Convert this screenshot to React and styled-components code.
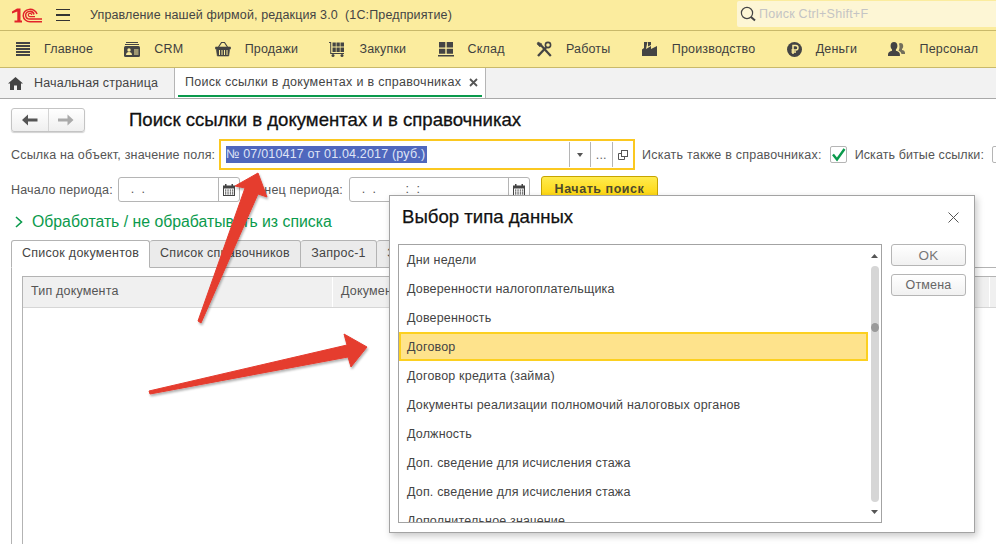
import React from "react";
import styled, { createGlobalStyle } from "styled-components";

const Global = createGlobalStyle`
  html, body { margin: 0; padding: 0; background: #fff; }
  * { box-sizing: border-box; }
  body { font-family: "Liberation Sans", Arial, sans-serif; font-size: 12.5px; color: #444; }
`;

const Page = styled.div`
  position: relative; width: 996px; height: 544px; overflow: hidden;
  display: flex; flex-direction: column; background: #fff;
  letter-spacing: 0.18px;
`;
const TitleBar = styled.header`
  height: 31px; flex: none; display: flex; align-items: center;
  background: #fbec9e; border-bottom: 1px solid #c9b96a; padding-left: 12px;
`;
const MenuBtn = styled.div`
  margin-left: 14px; width: 14px; height: 12px;
  border-top: 1.5px solid #333; border-bottom: 1.5px solid #333;
  display: flex; align-items: center;
  &::before { content: ""; display: block; width: 100%; height: 1.5px; background: #333; }
`;
const AppTitle = styled.div`
  margin-left: 20px; white-space: pre; color: #444; flex: 1; letter-spacing: 0.13px;
`;
const SearchBox = styled.div`
  width: 259px; height: 26px; margin-top: -2px; flex: none; background: #fdf6d5;
  display: flex; align-items: center; padding-left: 3px; gap: 3px;
  border-radius: 2px 0 0 2px; color: #c4c4c4; letter-spacing: 0.25px;
`;
const NavBar = styled.nav`
  height: 37px; flex: none; display: flex; align-items: center; gap: 31.3px;
  background: #fbec9e; border-bottom: 1px solid #c9b96a; padding-left: 14px;
`;
const NavItem = styled.div`
  display: flex; align-items: center; gap: 14px; color: #3f3f3f; white-space: nowrap;
`;
const TabBar = styled.div`
  height: 31px; flex: none; display: flex; background: #f2f2f2;
  border-bottom: 1px solid #a9a9a9;
`;
const HomeTab = styled.div`
  width: 175px; display: flex; align-items: center; gap: 11px; padding-left: 8px;
  border-right: 1px solid #b5b5b5; color: #444;
`;
const OpenTab = styled.div`
  position: relative; width: 311px; display: flex; align-items: center; justify-content: space-between;
  padding: 0 7px 2px 10px; background: #fff; border-right: 1px solid #b5b5b5; color: #444; letter-spacing: 0.3px;
  &::after { content: ""; position: absolute; left: 3px; right: 3px; bottom: 1px; height: 2px; background: #0a9a4c; }
`;
const Form = styled.main`
  flex: 1; display: flex; flex-direction: column; padding: 9px 0 0 11px; min-height: 0;
`;
const HeadRow = styled.div`
  height: 24px; display: flex; align-items: center; flex: none;
`;
const HistoryGroup = styled.div`
  width: 74px; height: 24px; display: flex; border: 1px solid #c4c4c4; border-radius: 3px;
  background: linear-gradient(#ffffff, #efefef); box-shadow: 0 1px 1px rgba(0,0,0,.18);
`;
const HistoryBtn = styled.div`
  flex: 1; display: flex; align-items: center; justify-content: center;
  &:first-child { border-right: 1px solid #d4d4d4; }
`;
const FormTitle = styled.h1`
  margin: 0 0 0 44px; font-size: 18.6px; font-weight: 400; color: #111; letter-spacing: 0;
  -webkit-text-stroke: 0.3px #111; white-space: nowrap;
`;
const FieldRow = styled.div`
  height: 31px; margin-top: 7px; display: flex; align-items: center; flex: none; white-space: nowrap;
`;
const FieldLabel = styled.span`
  color: #555; width: ${p => p.$w}px; flex: none; text-align: ${p => p.$right ? "right" : "left"};
`;
const RefField = styled.div`
  width: 416px; height: 31px; flex: none; border: 2px solid #fbc820; background: #fff;
  display: flex; align-items: center; padding-left: 5px;
`;
const Selected = styled.span`
  background: #4f67bd; color: #dfe4f6; height: 17px; line-height: 17px; display: block; width: 201px; white-space: nowrap; overflow: hidden;
`;
const FieldGap = styled.div`flex: 1;`;
const FieldAct = styled.div`
  width: 21.5px; height: 25px; border-left: 1px solid #b5b5b5; display: flex; align-items: center; justify-content: center; color: #666;
`;
const CheckLabel = styled.span`
  color: #555; margin-left: ${p => p.$ml}px; letter-spacing: ${p => p.$ls}px;
`;
const CheckBox = styled.div`
  width: 17px; height: 17px; margin-left: 8px; flex: none; border: 1px solid #b5b5b5; border-radius: 2px; background: #fff;
  display: flex; align-items: center; justify-content: center;
`;
const DateRow = styled.div`
  height: 25px; margin-top: 7px; display: flex; align-items: center; flex: none; white-space: nowrap;
`;
const DateField = styled.div`
  width: ${p => p.$w}px; height: 25px; flex: none; margin-left: ${p => p.$ml}px;
  border: 1px solid #b5b5b5; border-radius: 3px; background: #fff; display: flex; align-items: center;
  color: #555;
`;
const DateText = styled.span`
  flex: 1; padding-left: 8px; white-space: pre; line-height: 23px;
`;
const DateBtn = styled.div`
  width: 21px; height: 100%; flex: none; border-left: 1px solid #b5b5b5; display: flex; align-items: center; justify-content: center;
`;
const SearchBtn = styled.div`
  width: 117px; height: 26px; margin: -1px 0 0 11px; flex: none; border: 1px solid #c6a400; border-radius: 3px;
  background: linear-gradient(#ffeb4d, #fdd000); display: flex; align-items: center; justify-content: center;
  font-weight: 700; color: #4d4a2c; letter-spacing: 0.55px;
`;
const LinkRow = styled.div`
  height: 20px; margin-top: 10px; display: flex; align-items: center; gap: 9px; padding-left: 4px; flex: none;
  font-size: 15.8px; color: #0a9a4c; letter-spacing: 0; white-space: nowrap;
`;
const TabStrip = styled.div`
  margin-top: 8px; height: 28px; display: flex; flex: none; position: relative; z-index: 1; white-space: nowrap; letter-spacing: 0.27px;
`;
const Tab = styled.div`
  width: ${p => p.$w}px; height: 28px; flex: none; display: flex; align-items: center; justify-content: center;
  padding-bottom: 2px;
  border: 1px solid #b3b3b3; border-left-width: ${p => p.$active ? 1 : 0}px; border-radius: 3px 3px 0 0;
  border-bottom: ${p => p.$active ? "1px solid #fff" : "1px solid #b3b3b3"};
  background: ${p => p.$active ? "#fff" : "#ebebeb"}; color: #444; overflow: hidden;
`;
const TabPanel = styled.section`
  flex: 1; margin-top: -1px; border-left: 1px solid #b3b3b3; border-top: 1px solid #b3b3b3; padding: 8px 0 0 10px; min-height: 0;
`;
const Table = styled.div`
  height: 100%; border-left: 1px solid #b3b3b3;
`;
const TableHead = styled.div`
  height: 32px; display: grid; grid-template-columns: 309px 656px 1fr; gap: 1px;
  border-top: 1px solid #b3b3b3; border-bottom: 1px solid #d6d6d6; background: #fff;
`;
const HeadCell = styled.div`
  background: #f0f0f0; display: flex; align-items: center; padding: 0 0 2px 8px; color: #555; white-space: nowrap; overflow: hidden;
`;
const Dialog = styled.aside`
  position: absolute; left: 389px; top: 195px; width: 586px; height: 338px; z-index: 10;
  background: #fff; border: 1px solid #a3a3a3; box-shadow: 2px 3px 7px rgba(0,0,0,.22);
  display: flex; flex-direction: column; padding: 0 8px 8px;
`;
const DialogHead = styled.div`
  height: 48px; flex: none; display: flex; align-items: center; justify-content: space-between; padding: 0 7px 6px 4px;
`;
const DialogTitle = styled.h2`
  margin: 0; font-size: 18.6px; font-weight: 400; color: #111; letter-spacing: 0; -webkit-text-stroke: 0.25px #111;
`;
const DialogBody = styled.div`
  flex: 1; display: flex; gap: 9px; min-height: 0;
`;
const ListBox = styled.div`
  width: 484px; height: 279px; flex: none; border: 1px solid #a3a3a3; display: flex; overflow: hidden;
`;
const Rows = styled.ul`
  list-style: none; margin: 0; padding: 0; flex: 1; overflow: hidden;
`;
const Row = styled.li`
  height: 29px; display: flex; align-items: center; padding-left: ${p => p.$sel ? 6 : 8}px; white-space: nowrap; color: #444;
  ${p => p.$sel ? "background:#fee38c;border:2px solid #fcd020;" : ""}
`;
const ScrollCol = styled.div`
  width: 13px; flex: none; display: flex; flex-direction: column; align-items: center; padding: 9px 0 8px 0; margin-left: 0;
`;
const ScrollTrack = styled.div`
  width: 8px; flex: 1; margin: 8px 0 8px; background: #d6d6d6; border-radius: 4px; padding-top: 57px;
`;
const ScrollThumb = styled.div`
  width: 8px; height: 9px; background: #9a9a9a; border-radius: 50%;
`;
const SideBtns = styled.div`
  display: flex; flex-direction: column; gap: 8px;
`;
const DlgBtn = styled.div`
  width: 75px; height: 22px; border: 1px solid #b5b5b5; border-radius: 3px; background: linear-gradient(#fff, #f1f1f1);
  display: flex; align-items: center; justify-content: center; color: ${p => p.$big ? "#777" : "#666"}; font-size: ${p => p.$big ? 13.5 : 12.5}px;
`;
const ArrowLayer = styled.svg`
  position: absolute; left: 0; top: 0; pointer-events: none; z-index: 5;
`;

const c = "#444";
const Logo = () => (
  <svg width="30" height="15" viewBox="0 0 30 15" fill="none">
    <path d="M0 3.500 L5 0.500 H8.500 V12.500 H10 V14.500 H2.500 V12.500 H5.300 V3.500 L0 5.500Z" fill="#e2232a" />
    <path d="M25 6 A7 6.200 0 1 0 18 13.700 H30" stroke="#e2232a" strokeWidth="1.500" />
    <path d="M22 6.500 A4.200 3.800 0 1 0 18 11 H30" stroke="#e2232a" strokeWidth="1.500" />
    <path d="M19.800 6.800 A1.800 1.600 0 1 0 18 8.600 H23" stroke="#e2232a" strokeWidth="1.200" />
  </svg>
);
const IcMain = () => (
  <svg width="16" height="16" viewBox="0 0 16 16" fill={c}>
    {[1, 4, 7, 10, 13].map(y => <rect key={y} x="2" y={y} width="14" height="2" />)}
  </svg>
);
const IcCrm = () => (
  <svg width="16" height="16" viewBox="0 0 16 16">
    <path d="M2 1h12v1H2zM1 3h14v1H1z" fill={c} />
    <rect x="0" y="5" width="16" height="11" rx="1.500" fill={c} />
    <circle cx="5" cy="9" r="1.700" fill="#fbec9e" />
    <path d="M2 14c0-2 1.300-3 3-3s3 1 3 3z" fill="#fbec9e" />
    <path d="M10 8.500h4.500v1H10zM10 10.500h4.500v1H10zM10 12.500h4.500v1H10z" fill="#fbec9e" />
  </svg>
);
const IcBasket = () => (
  <svg width="16" height="16" viewBox="0 0 16 16" fill="none" stroke={c}>
    <path d="M3.500 6 L6.500 1.500 H9.500 L12.500 6" strokeWidth="1.200" />
    <path d="M0.500 6h15v2H14.700l-1 7H2.300l-1-7H.5z" fill={c} strokeWidth="0.600" />
    <path d="M4.500 9v5M7 9v5M9.500 9v5M12 9v5" stroke="#fbec9e" strokeWidth="1" />
  </svg>
);
const IcCart = () => (
  <svg width="16" height="16" viewBox="0 0 16 16">
    <path d="M0 1h2.200v11H15v1H1.200V2H0z" fill={c} />
    <path d="M3.500 1.500h3.300v4H3.500zM7.500 1.500h3.300v4H7.500zM11.500 1.500H15v4h-3.500zM3.500 6.500h3.300v4.500H3.500zM7.500 6.500h3.300v4.500H7.500zM11.500 6.500H15v4.500h-3.500z" fill={c} />
    <circle cx="4" cy="14.500" r="1.500" fill={c} /><circle cx="13" cy="14.500" r="1.500" fill={c} />
  </svg>
);
const IcStore = () => (
  <svg width="16" height="16" viewBox="0 0 16 16" fill={c}>
    <path d="M1 1h6.300v5.500H1zM8.700 1H15v5.500H8.700zM1 7.700h6.300v5H1zM8.700 7.700H15v5H8.700zM0 14h16v1.600H0z" />
  </svg>
);
const IcTools = () => (
  <svg width="16" height="16" viewBox="0 0 16 16" fill="none" stroke={c}>
    <path d="M2 15 L10 6.500" strokeWidth="2.400" />
    <path d="M14.800 15 L5 4.200" strokeWidth="2.200" />
    <path d="M2 1 L6 3 L4 6 L1 3Z" fill={c} strokeWidth="0.600" />
    <circle cx="12" cy="4" r="2.600" strokeWidth="1.600" />
  </svg>
);
const IcFactory = () => (
  <svg width="16" height="16" viewBox="0 0 16 16" fill={c}>
    <path d="M0 15V8.500L2 7V1h3.400L4 8 L9 5v3l6-3v10z" />
    <path d="M6 1h3v3L6 5.500z" />
  </svg>
);
const IcRuble = () => (
  <svg width="15" height="15" viewBox="0 0 15 15">
    <circle cx="7.500" cy="7.500" r="7.500" fill={c} />
    <path d="M6 12V3.500h2.700a2.200 2.200 0 0 1 0 4.600H4.500M4.500 10H9" fill="none" stroke="#fbec9e" strokeWidth="1.500" />
  </svg>
);
const IcPeople = () => (
  <svg width="17" height="16" viewBox="0 0 17 16" fill={c}>
    <path d="M6 1c2.200 0 3.400 1.600 3.400 3.800 0 1.600-.7 3-1.500 3.800v1.200c2.200.6 4 1.400 4 3.700V15H0v-1.500c0-2.300 1.800-3.100 4-3.700V8.600C3.200 7.800 2.600 6.400 2.600 4.800 2.600 2.600 3.800 1 6 1z" />
    <path d="M12.500 2c1.700 0 2.700 1.300 2.700 3 0 1.300-.5 2.300-1.200 3v1c1.500.4 3 1 3 2.800V13h-3.500c-.3-1.500-1.400-2.500-3-3.200.6-1 1-2.500 1-4 0-1.200-.2-2.200-.6-3 .4-.5 1-.8 1.600-.8z" opacity=".75" />
  </svg>
);
const IcSearch = () => (
  <svg width="16" height="16" viewBox="0 0 16 16" fill="none" stroke="#444">
    <circle cx="7" cy="7" r="5.600" strokeWidth="1.200" />
    <path d="M11 11l4 3.600" strokeWidth="2" />
  </svg>
);
const IcHome = () => (
  <svg width="15" height="13" viewBox="0 0 15 13" fill="#444">
    <path d="M7.500 0 L15 6.500 H13 V13 H9 V8.500 H6 V13 H2 V6.500 H0z" />
  </svg>
);
const IcClose = () => (
  <svg width="9" height="9" viewBox="0 0 9 9" stroke="#555" strokeWidth="1.800"><path d="M1 1l7 7M8 1l-7 7" /></svg>
);
const IcCal = () => (
  <svg width="12" height="12" viewBox="0 0 12 12" fill="#444">
    <path d="M0 1.500h2V0h1.500v1.500h5V0H10v1.500h2V12H0z" />
    <path d="M1 4.500h10v6.500H1z" fill="#fff" />
    {[2, 4.400, 6.800, 9].flatMap(x => [5.500, 7.500, 9.300].map(y => <rect key={x + "-" + y} x={x} y={y} width="1.300" height="1.200" />))}
  </svg>
);
const ArrowL = ({ col }) => (
  <svg width="16" height="12" viewBox="0 0 16 12" fill={col}><path d="M0 6 L6 0.500 V4.500 H15.500 V7.500 H6 V11.500z" /></svg>
);
const ArrowR = ({ col }) => (
  <svg width="16" height="12" viewBox="0 0 16 12" fill={col}><path d="M15.500 6 L9.500 0.500 V4.500 H0 V7.500 H9.500 V11.500z" /></svg>
);

const navItems = [
  [IcMain, "Главное"], [IcCrm, "CRM"], [IcBasket, "Продажи"], [IcCart, "Закупки"], [IcStore, "Склад"],
  [IcTools, "Работы"], [IcFactory, "Производство"], [IcRuble, "Деньги"], [IcPeople, "Персонал"],
];
const rows = [
  "Дни недели", "Доверенности налогоплательщика", "Доверенность", "Договор", "Договор кредита (займа)",
  "Документы реализации полномочий налоговых органов", "Должность", "Доп. сведение для исчисления стажа",
  "Доп. сведение для исчисления стажа", "Дополнительное значение",
];

export default function App() {
  return (
    <Page>
      <Global />
      <TitleBar>
        <Logo />
        <MenuBtn />
        <AppTitle>{"Управление нашей фирмой, редакция 3.0  (1С:Предприятие)"}</AppTitle>
        <SearchBox><IcSearch />Поиск Ctrl+Shift+F</SearchBox>
      </TitleBar>
      <NavBar>
        {navItems.map(([I, t]) => <NavItem key={t}><I />{t}</NavItem>)}
      </NavBar>
      <TabBar>
        <HomeTab><IcHome />Начальная страница</HomeTab>
        <OpenTab>Поиск ссылки в документах и в справочниках<IcClose /></OpenTab>
      </TabBar>
      <Form>
        <HeadRow>
          <HistoryGroup>
            <HistoryBtn><ArrowL col="#555" /></HistoryBtn>
            <HistoryBtn><ArrowR col="#aaa" /></HistoryBtn>
          </HistoryGroup>
          <FormTitle>Поиск ссылки в документах и в справочниках</FormTitle>
        </HeadRow>
        <FieldRow>
          <FieldLabel $w={208}>Ссылка на объект, значение поля:</FieldLabel>
          <RefField>
            <Selected>№ 07/010417 от 01.04.2017 (руб.)</Selected>
            <FieldGap />
            <FieldAct><svg width="6" height="4" viewBox="0 0 6 4" fill="#555"><path d="M0 0h6L3 4z" /></svg></FieldAct>
            <FieldAct>...</FieldAct>
            <FieldAct>
              <svg width="10" height="10" viewBox="0 0 10 10" fill="none" stroke="#555"><rect x="3.500" y="0.500" width="6" height="6" /><path d="M3.500 3.500H.5v6h6V6.500" /></svg>
            </FieldAct>
          </RefField>
          <CheckLabel $ml={7} $ls={0.23}>Искать также в справочниках:</CheckLabel>
          <CheckBox>
            <svg width="15" height="14" viewBox="0 0 15 14" fill="none" stroke="#0a9a4c" strokeWidth="2.400"><path d="M2 6.500 L6 11.500 L13.500 1" /></svg>
          </CheckBox>
          <CheckLabel $ml={8} $ls={0.1}>Искать битые ссылки:</CheckLabel>
          <CheckBox />
        </FieldRow>
        <DateRow>
          <FieldLabel $w={107}>Начало периода:</FieldLabel>
          <DateField $w={122} $ml={0}><DateText>{" .  ."}</DateText><DateBtn><IcCal /></DateBtn></DateField>
          <FieldLabel $w={103} $right>Конец периода:</FieldLabel>
          <DateField $w={181} $ml={6}><DateText>{" .  .        :  :"}</DateText><DateBtn><IcCal /></DateBtn></DateField>
          <SearchBtn>Начать поиск</SearchBtn>
        </DateRow>
        <LinkRow>
          <svg width="8" height="12" viewBox="0 0 8 12" fill="none" stroke="#0a9a4c" strokeWidth="1.600"><path d="M1 1l5.500 5L1 11" /></svg>
          Обработать / не обрабатывать из списка
        </LinkRow>
        <TabStrip>
          <Tab $w={139} $active>Список документов</Tab>
          <Tab $w={151}>Список справочников</Tab>
          <Tab $w={76}>Запрос-1</Tab>
          <Tab $w={76}>Запрос-2</Tab>
        </TabStrip>
        <TabPanel>
          <Table>
            <TableHead>
              <HeadCell>Тип документа</HeadCell>
              <HeadCell>Документ</HeadCell>
              <HeadCell />
            </TableHead>
          </Table>
        </TabPanel>
      </Form>

      <ArrowLayer width="996" height="544" viewBox="0 0 996 544">
        <defs>
          <filter id="sh" x="-10%" y="-10%" width="120%" height="120%">
            <feDropShadow dx="1" dy="2" stdDeviation="1" floodColor="#000" floodOpacity="0.3" />
          </filter>
        </defs>
        <g fill="#e53c2f" filter="url(#sh)" stroke="#e53c2f" strokeWidth="1" strokeLinejoin="round">
          <path d="M198 321 L245 188 L235 186 L258 173 L267 197 L258 194 L201 323Z" />
          <path d="M149 391 L347 345 L344 334 L367 347 L351 367 L348 357 L150 394Z" />
        </g>
      </ArrowLayer>

      <Dialog>
        <DialogHead>
          <DialogTitle>Выбор типа данных</DialogTitle>
          <svg width="11" height="11" viewBox="0 0 11 11" stroke="#555" strokeWidth="1"><path d="M.5 .5l10 10M10.500 .5l-10 10" /></svg>
        </DialogHead>
        <DialogBody>
          <ListBox>
            <Rows>
              {rows.map((r, i) => <Row key={i} $sel={i === 3}>{r}</Row>)}
            </Rows>
            <ScrollCol>
              <svg width="7" height="4" viewBox="0 0 7 4" fill="#555"><path d="M3.500 0L7 4H0z" /></svg>
              <ScrollTrack><ScrollThumb /></ScrollTrack>
              <svg width="7" height="4" viewBox="0 0 7 4" fill="#555"><path d="M0 0h7L3.500 4z" /></svg>
            </ScrollCol>
          </ListBox>
          <SideBtns>
            <DlgBtn $big>OK</DlgBtn>
            <DlgBtn>Отмена</DlgBtn>
          </SideBtns>
        </DialogBody>
      </Dialog>
    </Page>
  );
}
